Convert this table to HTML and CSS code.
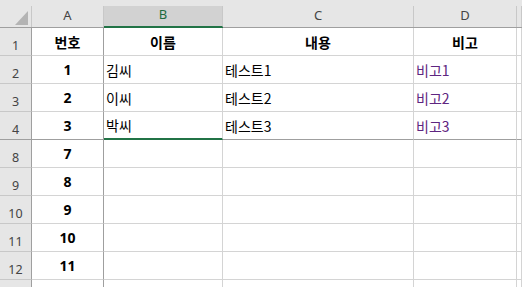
FILE: index.html
```html
<!DOCTYPE html>
<html>
<head>
    <title>Sheet1</title>
    <meta charset="utf-8">
    <link rel="stylesheet" href="styles.css">
</head>
<body>
<div class="sheet">
    <!-- column headers -->
    <div class="corner"><span><i class="corner-mark"></i></span></div>
    <div class="col-head"><span>A</span></div>
    <div class="col-head active"><span>B</span></div>
    <div class="col-head"><span>C</span></div>
    <div class="col-head"><span>D</span></div>
    <div class="col-head"><span></span></div>

    <div class="row-head">1</div>
    <div class="cell col-a title">번호</div>
    <div class="cell title">이름</div>
    <div class="cell title">내용</div>
    <div class="cell title">비고</div>
    <div class="cell"></div>

    <div class="row-head">2</div>
    <div class="cell col-a num">1</div>
    <div class="cell">김씨</div>
    <div class="cell">테스트1</div>
    <div class="cell note">비고1</div>
    <div class="cell"></div>

    <div class="row-head">3</div>
    <div class="cell col-a num">2</div>
    <div class="cell">이씨</div>
    <div class="cell">테스트2</div>
    <div class="cell note">비고2</div>
    <div class="cell"></div>

    <!-- row 4 is the last frozen row -->
    <div class="row-head frozen">4</div>
    <div class="cell col-a num frozen">3</div>
    <div class="cell frozen selected">박씨</div>
    <div class="cell frozen">테스트3</div>
    <div class="cell note frozen">비고3</div>
    <div class="cell frozen"></div>

    <div class="row-head">8</div>
    <div class="cell col-a num">7</div>
    <div class="cell"></div>
    <div class="cell"></div>
    <div class="cell"></div>
    <div class="cell"></div>

    <div class="row-head">9</div>
    <div class="cell col-a num">8</div>
    <div class="cell"></div>
    <div class="cell"></div>
    <div class="cell"></div>
    <div class="cell"></div>

    <div class="row-head">10</div>
    <div class="cell col-a num">9</div>
    <div class="cell"></div>
    <div class="cell"></div>
    <div class="cell"></div>
    <div class="cell"></div>

    <div class="row-head">11</div>
    <div class="cell col-a num">10</div>
    <div class="cell"></div>
    <div class="cell"></div>
    <div class="cell"></div>
    <div class="cell"></div>

    <div class="row-head">12</div>
    <div class="cell col-a num">11</div>
    <div class="cell"></div>
    <div class="cell"></div>
    <div class="cell"></div>
    <div class="cell"></div>

    <!-- next row, only its top edge shows -->
    <div class="row-head"></div>
    <div class="cell col-a"></div>
    <div class="cell"></div>
    <div class="cell"></div>
    <div class="cell"></div>
    <div class="cell"></div>
</div>
</body>
</html>
```

FILE: styles.css
```css
html, body {
    margin: 0;
    padding: 0;
    overflow: hidden;
    background-color: #ffffff;
}

.sheet {
    display: grid;
    grid-template-columns: 32px 72px 119px 191px 103px 1fr;
    grid-auto-rows: 28px;
    font-family: "Noto Sans CJK KR", sans-serif;
    font-size: 14px;
    color: #000000;
}

.sheet > div {
    box-sizing: border-box;
}

/* header strip */
.corner,
.col-head {
    padding-top: 6px;
    background-color: #e6e6e6;
    border-bottom: 1px solid #9f9f9f;
}

.corner span,
.col-head span {
    box-sizing: border-box;
    display: flex;
    height: 100%;
    align-items: center;
    justify-content: center;
    padding-bottom: 4px;
    border-right: 1px solid #c8c8c8;
    font-family: "Noto Sans", sans-serif;
    font-size: 13px;
    color: #444444;
}

.corner span {
    align-items: flex-end;
    justify-content: flex-end;
    padding: 0 3px 2px 0;
}

.corner-mark {
    width: 0;
    height: 0;
    border-left: 13px solid transparent;
    border-bottom: 14px solid #b4b4b4;
}

.col-head.active {
    border-bottom-color: #217346;
}

.col-head.active span {
    background-color: #d2d2d2;
    border-bottom: 1px solid #217346;
    color: #1e6b40;
}

.row-head {
    display: flex;
    align-items: center;
    justify-content: center;
    padding-top: 7px;
    background-color: #e6e6e6;
    border-right: 1px solid #9f9f9f;
    border-bottom: 1px solid #c8c8c8;
    font-family: "Noto Sans", sans-serif;
    font-size: 12.5px;
    color: #444444;
}

/* grid cells */
.cell {
    display: flex;
    align-items: center;
    padding-left: 2px;
    border-right: 1px solid #d4d4d4;
    border-bottom: 1px solid #d4d4d4;
    white-space: nowrap;
}

.cell.col-a {
    border-right-color: #9f9f9f;
}

.cell.title,
.cell.num {
    justify-content: center;
    padding-left: 0;
    font-weight: bold;
}

.cell.num {
    font-family: "Noto Sans", "Noto Sans CJK KR", sans-serif;
}

.cell.note {
    color: #5e2580;
}

.frozen,
.cell.frozen {
    border-bottom-color: #9f9f9f;
}

.cell.selected {
    border-bottom: 2px solid #217346;
}
```
